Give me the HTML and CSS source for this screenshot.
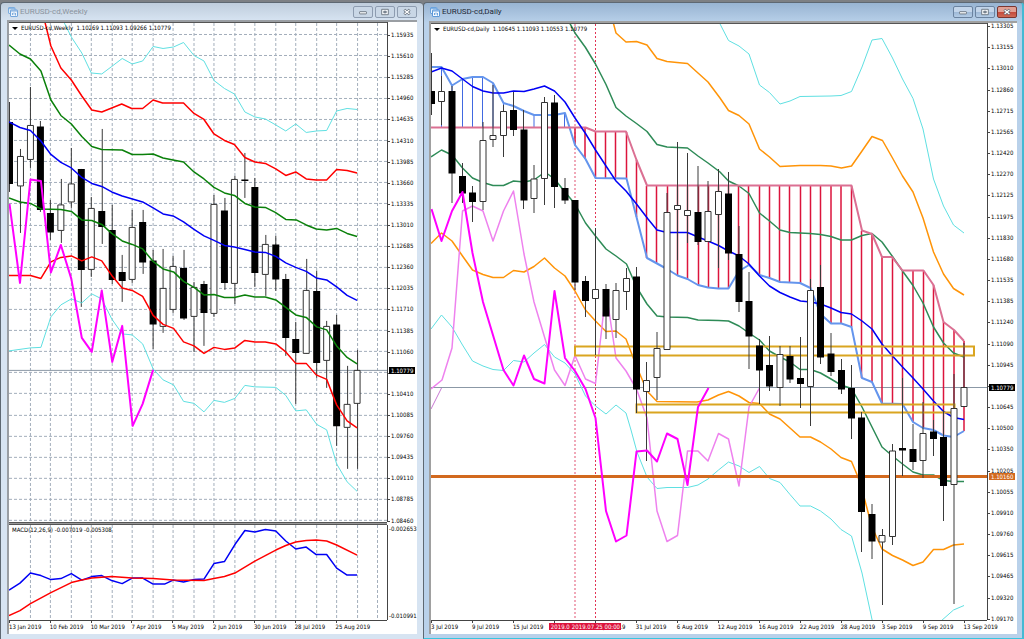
FILE: index.html
```html
<!DOCTYPE html>
<html lang="en">
<head>
<meta charset="utf-8">
<title>EURUSD-cd charts</title>
<link rel="stylesheet" href="styles.css">
</head>
<body>
<svg class="defs" aria-hidden="true">
  <symbol id="chart-icon" viewBox="0 0 10 10">
    <rect x="0.5" y="0.5" width="6.5" height="6" rx="0.5" fill="#e8f2fc" stroke="#6aa3dd"/>
    <path d="M0.5 1.7H7" stroke="#6aa3dd"/>
    <rect x="2.5" y="3" width="7" height="6.5" rx="0.5" fill="#f4f9ff" stroke="#5c98d8"/>
    <path d="M2.5 4H9.5M4.5 8V6M6 7.5V5.5M7.5 8.5V6" stroke="#5c98d8" stroke-width="0.9"/>
  </symbol>
  <symbol id="min-icon" viewBox="0 0 10 8"><rect x="1.5" y="3.7" width="7" height="2.2" rx="0.5" fill="#fafcfe" stroke="#59636f" stroke-width="0.8"/></symbol>
  <symbol id="max-icon" viewBox="0 0 10 8"><path d="M1.7 1.3H8.3V6.7H1.7z" fill="#fafcfe" stroke="#59636f" stroke-width="0.8"/><path d="M3.8 3.2H6.2V4.8H3.8z" fill="#9fb0c4" stroke="#59636f" stroke-width="0.8"/></symbol>
  <symbol id="close-icon" viewBox="0 0 10 8"><path d="M2.3 1.7L7.7 6.3M7.7 1.7L2.3 6.3" stroke="#59636f" stroke-width="2.6"/><path d="M2.6 2L7.4 6M7.4 2L2.6 6" stroke="#fff" stroke-width="1.3"/></symbol>
</svg>
<main class="desktop">
  <section class="window weekly">
    <header class="titlebar">
      <svg class="app-icon"><use href="#chart-icon"/></svg>
      <h1 class="title">EURUSD-cd,Weekly</h1>
      <button class="ctl" aria-label="Minimize"><svg><use href="#min-icon"/></svg></button>
      <button class="ctl" aria-label="Maximize"><svg><use href="#max-icon"/></svg></button>
      <button class="ctl" aria-label="Close"><svg><use href="#close-icon"/></svg></button>
    </header>
    <div class="client">
      <div class="plot">
        <svg class="chart" viewBox="9 23 379 499" preserveAspectRatio="none">
          <path class="grid" d="M9 34.5H388M9 55.5H388M9 77.5H388M9 98.5H388M9 119.5H388M9 140.5H388M9 161.5H388M9 182.5H388M9 203.5H388M9 225.5H388M9 246.5H388M9 267.5H388M9 288.5H388M9 309.5H388M9 330.5H388M9 351.5H388M9 372.5H388M9 393.5H388M9 415.5H388M9 436.5H388M9 457.5H388M9 478.5H388M9 499.5H388M9 520.5H388"/>
          <path class="grid" d="M30.5 23V522M50.5 23V522M71.5 23V522M91.5 23V522M112.5 23V522M132.5 23V522M153.5 23V522M173.5 23V522M194.5 23V522M214.5 23V522M235.5 23V522M255.5 23V522M276.5 23V522M296.5 23V522M317.5 23V522M337.5 23V522M358.5 23V522M378.5 23V522"/>
          <path class="bid" d="M9 370.5H388"/>
          <path class="wick" d="M9.5 102V192M20.5 149V233M30.5 87V168M40.5 121V212M50.5 200V240M61.5 179V243M71.5 148V208M81.5 169V307M91.5 197V277M102.5 129V244M112.5 205V284M122.5 255V302M132.5 210V283M143.5 210V274M153.5 250V349M163.5 249V333M173.5 256V313M184.5 250V320M194.5 282V352M204.5 281V346M214.5 195V317M225.5 198V290M235.5 176V304M245.5 153V198M255.5 178V287M266.5 235V296M276.5 236V291M286.5 274V356M296.5 322V404M307.5 259V354M317.5 271V378M327.5 321V388M337.5 315V446M348.5 366V469M358.5 350V469"/>
          <path class="bear" d="M9.5 122V184M40.5 126.500V210M50.5 213V232.500M81.500 169V270M102 211V227M112.500 230V280M122.500 272V281M143 222V262.500M153.500 260.500V324.500M184 268V318.500M204.500 284V313M225 210.500V283M245.500 179.500V181M255.500 187V273M276.500 244.500V279.500M286.500 279V338M296.500 339V353M317.500 291V363M337.500 324.500V426.500"/>
          <path class="bull" d="M17.500 156.500h6v29.500h-6zM27.500 125.500h6v34h-6zM58 205h6v25.500h-6zM68.500 184h6v18h-6zM88.500 208.500h6v61h-6zM129.500 227.500h6v52h-6zM160.500 288.500h6v38h-6zM170.500 266.500h6v43h-6zM191.500 287.500h6v29h-6zM211.500 204.500h6v109h-6zM232 179.500h6v104h-6zM263 244.500h6v30h-6zM304 290.500h6v63h-6zM324.500 326.500h6v34h-6zM345 404.500h6v23h-6zM355 370.500h6v33h-6z"/>
          <polyline class="line cyan" points="62,18 71.500,37 82,53 91.500,73 102,74 112,66.500 122.500,58.500 132.500,64 143,61 153.500,46.500 163.500,48.500 174,47 184,42.500 194.500,55.500 204.500,61 214.500,80.500 225,88.500 235,94 245.500,112 255.500,117 266,119 276.500,125 286.500,131 296.500,124 307,132.500 317.500,131 327.500,130.500 337.500,111 348,108.500 358,109.500"/>
          <polyline class="line cyan" points="9,351 30.500,348 41,347.500 51,317 61,305 71.500,299 82,303 92,294 102,299 112,319 122.500,334 132.500,335 143,344 153.500,369 163.500,380 174,385 184,401.500 194.500,403.500 204.500,412 214.500,400.500 225,402.500 235.500,398.500 245.500,385.500 255.500,387 276.500,387.500 286.500,395.500 296.500,411 307,410 317.500,424.500 327.500,430 337.500,464 348,482 358,491.500"/>
          <polyline class="line red" points="44,18 51,46 61,68 71.500,80 82,96 92,110 102,112 122,104 132,108.500 143,108.500 153.500,100 163,103 184,103 194.500,113.500 204.500,119.500 214.500,134 225,140.500 235,144.500 245.500,157.500 255.500,162 266,163.500 276.500,169 286.500,175.500 296.500,172 307,179 317,180 327.500,180 337.500,169.500 348,170.500 358,173"/>
          <polyline class="line red" points="9,275.500 30.500,275.500 41,278.500 51,262 61,257.500 71.500,256 82,261 92,257 102,261 112,275.500 122.500,288 132.500,290.500 143,296.500 153.500,315.500 163.500,324.500 174,328.500 184,342 194.500,346 204.500,353.500 214.500,347.500 225,349.500 235.500,348 245.500,340.500 255.500,342 266,342 276.500,344 286.500,352 296.500,363.500 307,363.500 317,375 327.500,379.500 337.500,405 348,421 358,428"/>
          <polyline class="line green" points="9,45 20,54 30.500,59 41,71 51,100 61,115.500 71.500,124 82,136.500 92,146.500 102,149.500 122.500,150 132.500,154.500 143,154.500 153.500,154 163.500,158 173.500,160 184,162 194.500,172 204.500,179 214.500,187.500 225,193 235,195.500 245.500,203.500 255.500,207 266,207.500 276,212.500 286.500,219.500 297,220 307,225 317,229 327.500,230 337.500,228.500 348,233.500 358,236.500"/>
          <polyline class="line green" points="9,198 20,202 30.500,203.500 41,209 61,209.500 71.500,211.500 82,220 92,220.500 102,224.500 112,233.500 122.500,241 132.500,244.500 143,249 153.500,261.500 163.500,269 174,272 184,281.500 194.500,287.500 204.500,295 214.500,294.500 225,297.500 235,297.500 245.500,295 255.500,297 266,297 276.500,300 286.500,307.500 296.500,315 307,317.500 317.500,327 327.500,330 337.500,346 348,357.500 358,364"/>
          <polyline class="line blue" points="9,122 20,127.500 30.500,130.500 41,141 51,154.500 61,162.500 71.500,168 82,177.500 92,183.500 102,186.500 112,192 122.500,196 143,202 153.500,208 163.500,214 173.500,216 184,222 194.500,229.500 204.500,236 214.500,240.500 225,245.500 235,247 245.500,249.500 255.500,252 266,252.500 276.500,256.500 286.500,263 296.500,267.500 307,271.500 317,278 327.500,280 337.500,287 348,295.500 358,300.500"/>
          <polyline class="line magenta" points="9.500,204 20,283 30.500,179.500 41,181 51,272.500 61,245 71.500,279 82,338 92,352 102,290.500 112.500,362 122.500,326 133,426 143,404 153.500,370"/>
        </svg>
        <p class="caption"><span class="arrow"></span>EURUSD-cd,Weekly&nbsp; 1.10269 1.11093 1.09266 1.10779</p>
      </div>
      <div class="prices weekly-prices">
        <span>1.15935</span><span>1.15610</span><span>1.15285</span><span>1.14960</span><span>1.14635</span><span>1.14310</span><span>1.13985</span><span>1.13660</span><span>1.13335</span><span>1.13010</span><span>1.12685</span><span>1.12360</span><span>1.12035</span><span>1.11710</span><span>1.11385</span><span>1.11060</span><span class="bare"></span><span>1.10410</span><span>1.10085</span><span>1.09760</span><span>1.09435</span><span>1.09110</span><span>1.08785</span><span>1.08460</span>
        <b class="tag tag-bid">1.10779</b>
      </div>
      <div class="splitter"></div>
      <div class="plot">
        <svg class="chart" viewBox="9 525 379 95" preserveAspectRatio="none">
          <path class="grid" d="M30.5 525V620M50.5 525V620M71.5 525V620M91.5 525V620M112.5 525V620M132.5 525V620M153.5 525V620M173.5 525V620M194.5 525V620M214.5 525V620M235.5 525V620M255.5 525V620M276.5 525V620M296.5 525V620M317.5 525V620M337.5 525V620M358.5 525V620M378.5 525V620"/>
          <polyline class="line blue" points="9,590 20,583 30.500,573 41,575.500 51,579.500 61,578.500 71.500,573.500 82,580 92,576.500 102,575.500 112,580.500 122.500,583.500 132.500,578 143,578 153.500,584 165,584 173.500,580 184,582 194.500,579.500 204.500,579 214.500,563.500 225,561.500 235.500,544.500 245.500,530.500 255.500,532 266,529.500 276.500,531 286.500,541 296.500,549 307,547 317,554.500 327.500,554.500 337.500,568 348,575 358,575"/>
          <polyline class="line red" points="9,615.500 20,610.500 30.500,603.500 51,592.500 71.500,582.500 82,580 92,578 112,576.500 132.500,578 153.500,578.500 173.500,580 204.500,580.500 214.500,578.500 225,576.500 235.500,573 255.500,561 276.500,550 286.500,545.500 296.500,542 307,540.500 317,540 327.500,541 337.500,545 358,555"/>
        </svg>
        <p class="caption">MACD(12,26,9) -0.007019 -0.005308</p>
      </div>
      <div class="prices macd-prices"><span>-0.002653</span><span>-0.010991</span></div>
      <div class="dates weekly-dates">
        <time>13 Jan 2019</time><time>10 Feb 2019</time><time>10 Mar 2019</time><time>7 Apr 2019</time><time>5 May 2019</time><time>2 Jun 2019</time><time>30 Jun 2019</time><time>28 Jul 2019</time><time>25 Aug 2019</time>
      </div>
    </div>
  </section>

  <section class="window daily">
    <header class="titlebar">
      <svg class="app-icon"><use href="#chart-icon"/></svg>
      <h1 class="title">EURUSD-cd,Daily</h1>
      <button class="ctl" aria-label="Minimize"><svg><use href="#min-icon"/></svg></button>
      <button class="ctl" aria-label="Maximize"><svg><use href="#max-icon"/></svg></button>
      <button class="ctl close" aria-label="Close"><svg><use href="#close-icon"/></svg></button>
    </header>
    <div class="client">
      <div class="plot">
        <svg class="chart" viewBox="431 24 556 596" preserveAspectRatio="none">
          <path class="event soft" d="M575 24V620"/>
          <path class="event" d="M595.500 24V620"/>
          <path class="bid" d="M431 387.500H987"/>
          <path class="kumo-up" d="M441.500 67V127M452 86V127M462.500 79V127M472.500 77V127M482.500 77V127M493 83V127M503.500 103V127M513.500 106V127M523.500 111V127M534 115V127M544.500 115V127M554.500 115V127M564.500 113V127"/>
          <path class="kumo-down" d="M575 128V145M585 128V159M595.500 132V178M605.500 132V178M615.500 132V178M626.500 132V178M636.500 160V217M646.500 186V258M656.500 186V263M667.500 186V269M677.500 186V275M687.500 186V279M698.500 186V285M708.500 186V287M718.500 186V288M728.500 186V288M738.500 186V271M748.500 186V265M759.500 186V275M769.500 186V278M779.500 186V282M789.500 186V282M800.500 186V283M810.500 186V288M820.500 186V314M831 186V323M841 186V323M851.500 186V327M861.500 231V378M872 234V382M882 257V403M892.500 257V403M902.500 271V404M913 271V422M923.500 271V428M933.500 285V429M943.500 322V435M954 330V437M964 341V431"/>
          <polyline class="line cyan" points="717,18 728.500,40.500 739,46 749,54 759.500,85 769.500,92.500 780,104 790,101 800,96.500 831,96 841,95.500 851.500,91.500 862,67 872,40 882,38.500 892.500,58 902.500,79 913,98.500 923,129 933.500,179 943.500,206 953.500,225 964,233"/>
          <polyline class="line cyan" points="431,329 441.500,315 452,327 462.500,345 472.500,361 483,366 493,369.500 503.500,370.500 513.500,360.500 524,362 534,353 544.500,344.500 554.500,357 565,363 575,374 585.500,396 595.500,406 606,414 616,405 626,413 631,430 637,452 647,477 657,488.500 667,487.500 687.500,487.500 698,485 708,479 718.500,470 728.500,462 739,466 749,472.500 759.500,466.500 769.500,478.500 780,482.500 790,494.500 800,506 810.500,506 820.500,511 831,519 841,529.500 851.500,536 862,573 873,624"/>
          <polyline class="line cyan" points="941,621 953.500,610 964,605.500"/>
          <polyline class="line orange" points="612,18 616,33 626,42 636.500,41.500 647,45 657,58.500 667,61.500 677,62.500 687.500,63.500 698,73 708,82 720,98 728.500,110.500 739,115.500 749,124 759.500,149 769.500,157 780,166.500 790,166 800,165.500 820.500,165.500 831,166 841.500,168 851.500,166 862,151 872,136.500 882.500,140.500 892.500,158 902.500,176 913,192 923,218 933.500,252 943.500,274 953.500,288.500 964,295"/>
          <polyline class="line orange" points="431,243.500 441.500,233 452,241 462.500,256 472.500,270 483,274.500 493,277.500 503.500,277.500 513.500,270.500 524,272 534,266.500 544.500,258 554.500,268 565,276 575,291 585.500,310 595.500,321 606,331.500 616,331 626,339 636,365 647,391 657,401.500 697,402 708,400 718.500,395 728.500,391.500 739,396 749,402.500 759.500,403.500 769.500,414 780,419 790,428 800,437 810.500,437 820.500,442 831,449 841,457.500 851.500,461.500 858,477 864,497 872,527 882,549 892.500,555.500 902.500,560 913,565.500 923,562 933.500,549.500 943.500,549.500 953.500,545 964,544"/>
          <polyline class="line sea" points="567,18 575,33 585.500,47.500 595.500,64 606,84.500 616,107.500 626,116 636.500,123.500 647,131.500 657,144.500 667,147 687.500,148 698,156 708,163 720,172 728.500,181 739,186 749,193.500 759.500,213 769.500,221 780,230 790,232.500 810,233.500 820.500,234.500 831,236.500 841,240 851.500,240 862,235.500 872,233.500 882,242 892.500,256.500 902.500,271 913,285.500 923,303 933.500,327 943.500,343 953.500,353 964,357"/>
          <polyline class="line sea" points="431,157 441.500,150 452,155 462.500,168 472.500,178 483,182.500 493,185.500 503.500,185.500 513.500,181 524,182 534,180 545,172 554.500,179 565,192 575,204 585.500,223 595.500,236 606,249 616,256 626.500,264 636.500,287 647,304 657,316 667,317 687.500,317.500 698,320 718.500,320.500 728.500,321 739,326 749,333 759.500,340 769.500,351 780,357 790,362 800,369.500 810.500,369.500 820.500,373 831,379 841,385 851.500,388.500 862,407 872,427 882,447 892.500,456 902.500,464 913,472 923,475 933.500,475 943.500,480.500 953.500,481.500 964,481.500"/>
          <polyline class="line span-a" points="431,67 441.500,67 452,85.500 462.500,79 472.500,77 483,77 493,83 503.500,103 513.500,106 524,111 534,115 554.500,115 565,113 575,145 585.500,159 595.500,178 626.500,178.500 636.500,217 647,258 657,263.500 667,269 677.500,275.500 687.500,279 698,285 708,287.500 718.500,288.500 728.500,288.500 739,271 749,265 759.500,275 769.500,278 780,282 800,283 810.500,288 820.500,314 831,323.500 841.500,323.500 851.500,327 862,378 872,382 882,403.500 902.500,404 913,422 923,428 933.500,430 943.500,435.500 953.500,437 964,431"/>
          <polyline class="line span-b" points="431,127.500 585.500,127.500 595.500,131.500 626,131.500 636.500,160 647,185.500 851.500,185.500 862,230.500 872,234 882,257 892,257 902.500,270.500 923.500,270.500 933.500,285 943.500,322 954,330 964,341"/>
          <polyline class="line blue" points="431,72 441.500,68 452,71 462.500,79 472.500,86.500 483,91 493,93 503.500,93 513.500,91 524,91.500 534,89 544.500,86 554.500,91 565,102 575,118 585.500,133.500 595.500,150 606,166 616,181 626,191 636.500,204 648,219 657,230 667,232.500 687.500,232.500 698,237 708,241 718.500,245.500 728.500,251 739,256 749,264 759.500,276 769.500,286 780,292.500 790,297 800.500,301 810.500,302 820.500,304 831,308 841,312.500 851.500,314 862,321 872,329 882,344 892.500,356 902.500,367 913,378 923,389 933.500,401 943.500,411.500 953.500,417.500 964,419.500"/>
          <polyline class="line violet" points="431,389 442,380 452,348 462.500,211 472.500,206 483,211 493,241 503.500,211 513.500,191 524,254 534,302 544.500,337 554.500,370 565,385.500 575,355.500 585.500,379 595.500,383.500 606,291 616,358 626,371 636.500,389 647,418 657,511 667,541.500 677.500,535.500 687.500,451 698,451 708,461 718.500,433.500 728.500,439 739,486 749,407 759.500,388"/>
          <polyline class="line plum" points="431,409 441.500,388"/>
          <rect class="zone" x="575" y="346.500" width="399" height="9"/>
          <rect class="zone" x="636.500" y="404.500" width="318" height="8"/>
          <path class="level" d="M431 476.500H987"/>
          <path class="wick" d="M431.500 53V115M441.500 76V125M452 86V203M462.500 163V203M472.500 186V222M483 122V210M493 85V147M503.500 105V157M513.500 92V136M523.500 110V209M534 165V213M544.500 97V205M554.500 95V208M565 178V204M575 200V290M585.500 276V317M595.500 228V355M606 284V339M616 283V338M626.500 268V310M636.500 267V413M646.500 362V461M657 332V400M667 193V350M677.500 142V260M687.500 153V243M698 166V245M708 181V242M718.500 169V268M728.500 172V260M739 226V312M749 272V369M759.500 339V404M769.500 336V391M780 346V406M790 346V383M800.500 337V408M810.500 279V426M820.500 265V364M831 333V376M841.500 359V394M851.500 365V439M861.500 412V552M872 504V559M882.500 529V605M892.500 444V545M902.500 378V476M913 424V470M923 402V478M933.500 420V456M943.500 410V521M954 374V604M964 343V407"/>
          <path class="bear" d="M431.500 91V104M452 91V173.500M462.500 176V193.500M472.500 192.500V202M513.500 110V130M524 129.500V200.500M554.500 102.500V187M565 188V200.500M575 200V282.500M585.500 281V301M606 289V316.500M636.500 276.500V389.500M698 212V242M728.500 193.500V253.500M739 254V302M749 301V336.500M759.500 345.500V370.500M769.500 365V386.500M790 356V379.500M800.500 378V384M820.500 287V357.500M831 353.500V372M841.500 370V389.500M851.500 388V418.500M861.500 417.500V512M872 514V541.500M902.500 448V450.500M913 449V462M933.500 431.500V439M943.500 437V486"/>
          <path class="bull" d="M438.500 91.500h6v10h-6zM480 140.500h6v61h-6zM490 135.500h6v4h-6zM500.500 111.500h6v24h-6zM531 179h6v19.500h-6zM541.500 102.500h6v76h-6zM592.500 289.500h6v9h-6zM613 290.500h6v29h-6zM623.500 278.500h6v13h-6zM643.500 380.500h6v11h-6zM654 348.500h6v29h-6zM664 212.500h6v137h-6zM674.500 205.500h6v4h-6zM684.500 210.500h6v5h-6zM705 211.500h6v30h-6zM715.500 191.500h6v23h-6zM777 354.500h6v33h-6zM807.500 290.500h6v96h-6zM879 535.500h6v6.500h-6zM889.500 451h6v85.500h-6zM920 433.500h6v27h-6zM951 408.500h6v76h-6zM961 387.500h6v19h-6z"/>
          <polyline class="line magenta" points="431.500,209 441.500,241 452,211 462.500,192 472.500,253 483,302 503.500,370 513.500,385.500 524,355.500 534,379 544.500,383.500 554.500,291 565,358 575,371 585.500,389 595.500,418 606,511 616,541.500 626.500,535.500 636.500,451.500 647,450.500 657,461.500 667,433.500 677.500,439 687.500,485 698,407 708.500,388"/>
        </svg>
        <p class="caption"><span class="arrow"></span>EURUSD-cd,Daily&nbsp; 1.10645 1.11093 1.10553 1.10779</p>
      </div>
      <div class="prices daily-prices">
        <span>1.13305</span><span>1.13155</span><span>1.13010</span><span>1.12860</span><span>1.12715</span><span>1.12565</span><span>1.12420</span><span>1.12270</span><span>1.12125</span><span>1.11975</span><span>1.11830</span><span>1.11680</span><span>1.11535</span><span>1.11385</span><span>1.11240</span><span>1.11090</span><span>1.10945</span><span class="bare"></span><span>1.10645</span><span>1.10500</span><span>1.10350</span><span>1.10205</span><span>1.10055</span><span>1.09910</span><span>1.09760</span><span>1.09615</span><span>1.09465</span><span>1.09320</span><span>1.09170</span>
        <b class="tag tag-bid">1.10779</b>
        <b class="tag tag-level">1.10160</b>
      </div>
      <div class="dates daily-dates">
        <time>3 Jul 2019</time><time>9 Jul 2019</time><time>15 Jul 2019</time><time></time><time>25 Jul 2019</time><time>31 Jul 2019</time><time>6 Aug 2019</time><time>12 Aug 2019</time><time>16 Aug 2019</time><time>22 Aug 2019</time><time>28 Aug 2019</time><time>3 Sep 2019</time><time>9 Sep 2019</time><time>13 Sep 2019</time>
        <b class="event-tag"><span>2019.0</span><span>2019.07.25 00:00</span></b>
      </div>
    </div>
  </section>
</main>
</body>
</html>
```
FILE: styles.css
```css
* { box-sizing: border-box; }
body {
  margin: 0;
  background: #7d8084;
  color: #000;
  font: 6px/8px "DejaVu Sans Condensed", "Open Sans", sans-serif;
}
.defs { position: absolute; width: 0; height: 0; }
.desktop {
  display: grid;
  grid-template-columns: 423fr 601fr;
  height: 100vh;
  min-height: 400px;
  padding-top: 2px;
}
.window {
  display: flex;
  flex-direction: column;
  min-width: 0;
  border: 1px solid #5e6872;
  border-width: 1px 0 0 1px;
  border-radius: 4px 4px 0 0;
}
.weekly {
  padding: 0 6px 5px 6px;
  background: linear-gradient(#bfcddc, #d7e4f2 18px);
}
.daily {
  padding: 0 5px 4px 5px;
  border-width: 1px 2px 1px 1px;
  border-right-color: #45b9d3;
  border-bottom-color: #38c6e0;
  background: linear-gradient(#98b4d2, #b9d1ea 20px);
}
.titlebar {
  display: flex;
  align-items: center;
  gap: 2px;
  height: 17px;
  flex: none;
}
.daily .titlebar { height: 18px; }
.app-icon { width: 10px; height: 10px; margin-left: 1px; }
.weekly .app-icon { opacity: 0.8; }
.title {
  flex: 1;
  margin: 0;
  font: 8px/12px Roboto, "Open Sans", sans-serif;
  color: #1e2a38;
}
.weekly .title { color: #8b949e; }
.ctl {
  display: grid;
  place-items: center;
  width: 20px;
  height: 12px;
  padding: 0;
  border: 1px solid #8d9cb0;
  border-radius: 2px;
}
.weekly .ctl { background: #c9d7e6; }
.daily .ctl { border-color: #6b83a0; background: linear-gradient(#c3d5ea 45%, #9db8d6 50%, #b4cce6); }
.daily .ctl.close { border-color: #7b3630; background: linear-gradient(#e0a094 45%, #c4483a 50%, #cf6a55); }
.ctl svg { width: 10px; height: 8px; }
.client {
  flex: 1;
  display: grid;
  grid-template-columns: 1fr 30px;
  min-height: 0;
  border: solid #8a8a8a;
  border-width: 2px 0 0 2px;
  background: #fff;
}
.weekly .client { grid-template-rows: 499fr 3px 95fr 14px; border-color: #9a9ea3; }
.daily .client { grid-template-rows: 1fr 14px; border-color: #a0a0a0; }
.plot {
  position: relative;
  min-height: 0;
  min-width: 0;
  border-top: 1px solid #555;
}
.splitter + .plot { border-top: 0; }
.chart { display: block; width: 100%; height: 100%; overflow: hidden; position: absolute; inset: 0; }
.caption {
  position: absolute;
  top: 1px;
  left: 3px;
  display: flex;
  align-items: center;
  gap: 3px;
  margin: 0;
  white-space: nowrap;
}
.arrow { border: 3px solid transparent; border-top-color: #000; border-bottom: 0; }
.splitter { grid-column: 1 / -1; width: calc(100% - 30px); background: #999; border: solid #555; border-width: 1px 0; }
.prices {
  position: relative;
  display: flex;
  flex-direction: column;
  justify-content: space-between;
  border-left: 1px solid #444;
  line-height: 2px;
}
.prices span { padding-left: 3px; position: relative; min-height: 2px; }
.prices span::before {
  content: "";
  position: absolute;
  left: 0;
  top: 1px;
  width: 2px;
  height: 1px;
  background: #444;
}
.weekly-prices { padding: 12px 0 0; }
.daily-prices { padding: 2px 0 0; }
.macd-prices { padding: 3px 0; }
.macd-prices span { padding-left: 1px; }
.macd-prices span::before { content: none; }
.tag {
  position: absolute;
  left: 1px;
  width: 26px;
  padding-left: 2px;
  font-weight: 400;
  line-height: 7px;
  color: #fff;
  background: #000;
}
.weekly .tag-bid { top: 69%; }
.daily .tag-bid { top: 60.400%; }
.tag-level { top: 75.300%; background: #d2691e; }
.dates {
  position: relative;
  grid-column: 1 / -1;
  display: grid;
  margin-right: 30px;
  border-top: 1px solid #444;
  line-height: 12px;
  white-space: nowrap;
}
.weekly-dates { grid-template-columns: repeat(9, 10.800%); }
.daily-dates { grid-template-columns: repeat(14, 7.370%); }
.dates time { position: relative; min-width: 0; }
.dates time::before {
  content: "";
  position: absolute;
  left: 0;
  top: 0;
  width: 1px;
  height: 2px;
  background: #444;
}
.event-tag {
  position: absolute;
  left: 21.200%;
  top: 2px;
  display: flex;
  width: 72px;
  padding-left: 2px;
  font-weight: 400;
  line-height: 7px;
  color: #fff;
  background: #dc143c;
}
.event-tag span:first-child { width: 21px; }

.chart path, .chart polyline, .chart rect { vector-effect: non-scaling-stroke; fill: none; }
.grid { stroke: #a3aebb; stroke-dasharray: 3 2; }
.bid { stroke: #8b98a6; }
.wick { stroke: #3a3a3a; }
.bear { stroke: #000; stroke-width: 7px; }
.chart .bull { fill: #fff; stroke: #333; }
.line { stroke-width: 1.500px; stroke-linejoin: round; }
.cyan { stroke: #5fe0e2; stroke-width: 1px; }
.red { stroke: #f00; }
.green { stroke: #0a800a; }
.sea { stroke: #2e8b57; }
.blue { stroke: #0000f5; }
.orange { stroke: #ff9408; }
.magenta { stroke: #f0f; stroke-width: 2px; }
.violet { stroke: #ee82ee; stroke-width: 1.500px; }
.plum { stroke: #c878d2; stroke-width: 1px; }
.span-a { stroke: #6495ed; stroke-width: 2px; }
.span-b { stroke: #db7093; stroke-width: 2px; }
.kumo-up { stroke: #4169e1; }
.kumo-down { stroke: #dc143c; stroke-width: 1.500px; }
.zone { stroke: #daa520; stroke-width: 2px; }
.level { stroke: #d2691e; stroke-width: 3px; }
.event { stroke: #e23455; stroke-dasharray: 2 2; }
.soft { stroke: #f0a8b8; stroke-width: 2px; }
```
